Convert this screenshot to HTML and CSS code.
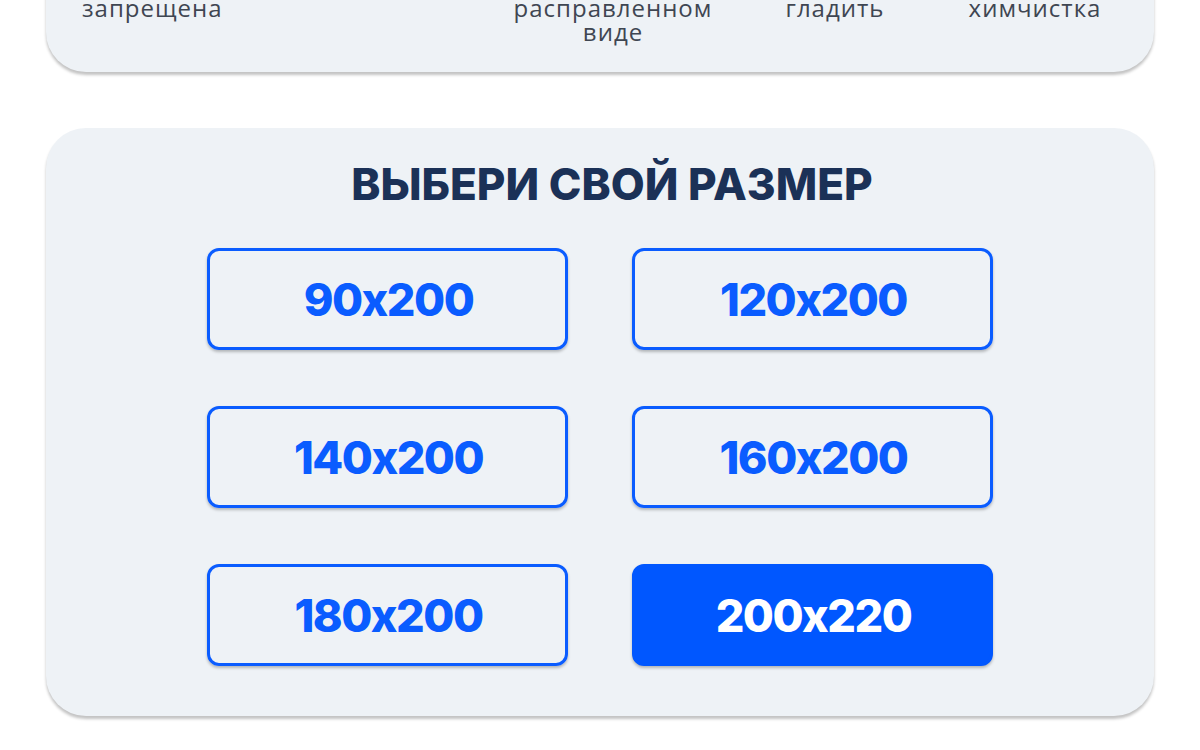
FILE: index.html
```html
<!DOCTYPE html>
<html lang="ru">
<head>
<meta charset="utf-8">
<title>Выбери свой размер</title>
<link rel="stylesheet" href="styles.css">
</head>
<body>
  <section class="care-card">
    <div class="care-row">
      <div class="care-item">запрещена</div>
      <div class="care-item"></div>
      <div class="care-item">расправленном<br>виде</div>
      <div class="care-item">гладить</div>
      <div class="care-item">химчистка</div>
    </div>
  </section>

  <section class="size-card">
    <h2 class="size-title">ВЫБЕРИ СВОЙ РАЗМЕР</h2>
    <div class="size-grid">
      <button class="size-btn">90x200</button>
      <button class="size-btn">120x200</button>
      <button class="size-btn">140x200</button>
      <button class="size-btn">160x200</button>
      <button class="size-btn">180x200</button>
      <button class="size-btn size-btn--active">200x220</button>
    </div>
  </section>
</body>
</html>
```

FILE: styles.css
```css
html, body {
  margin: 0;
  padding: 0;
  background: #ffffff;
}

body {
  width: 1200px;
  height: 750px;
  overflow: hidden;
  font-family: "Inter", "Liberation Sans", sans-serif;
}

.care-card {
  margin: -60px 46px 0;
  padding: 56px 36px 28px;
  background: #eef2f6;
  border-radius: 0 0 40px 40px;
  box-shadow: 0 3px 3px rgba(0, 0, 0, 0.24);
}

.care-row {
  display: grid;
  grid-template-columns: 142px 279px 220px 224px 176px;
}

.care-item {
  font-family: "Open Sans", "DejaVu Sans", sans-serif;
  font-size: 24px;
  line-height: 24px;
  letter-spacing: 1px;
  color: #3f4652;
  text-align: center;
  white-space: nowrap;
}

.care-item:first-child {
  text-align: left;
}

.size-card {
  margin: 56px 46px 0;
  padding: 36px 0 50px;
  background: #eef2f6;
  border-radius: 40px;
  box-shadow: 0 3px 3px rgba(0, 0, 0, 0.24);
}

.size-title {
  margin: 0 0 44px;
  padding-left: 24px;
  text-align: center;
  font-family: "Inter", sans-serif;
  font-weight: 800;
  font-size: 44px;
  line-height: 40px;
  color: #1b3157;
}

.size-grid {
  display: grid;
  grid-template-columns: 361px 361px;
  column-gap: 64px;
  row-gap: 56px;
  justify-content: center;
}

.size-btn {
  height: 102px;
  box-sizing: border-box;
  border: 3px solid #0a5cff;
  border-radius: 12px;
  background: transparent;
  box-shadow: 0 2px 3px rgba(0, 0, 0, 0.25);
  font-family: "Inter", sans-serif;
  font-weight: 800;
  font-size: 45px;
  letter-spacing: -1.5px;
  color: #0a5cff;
  cursor: pointer;
  padding: 0 0 0 2px;
}

.size-btn--active {
  background: #0057ff;
  border-color: #0057ff;
  color: #ffffff;
}
```
